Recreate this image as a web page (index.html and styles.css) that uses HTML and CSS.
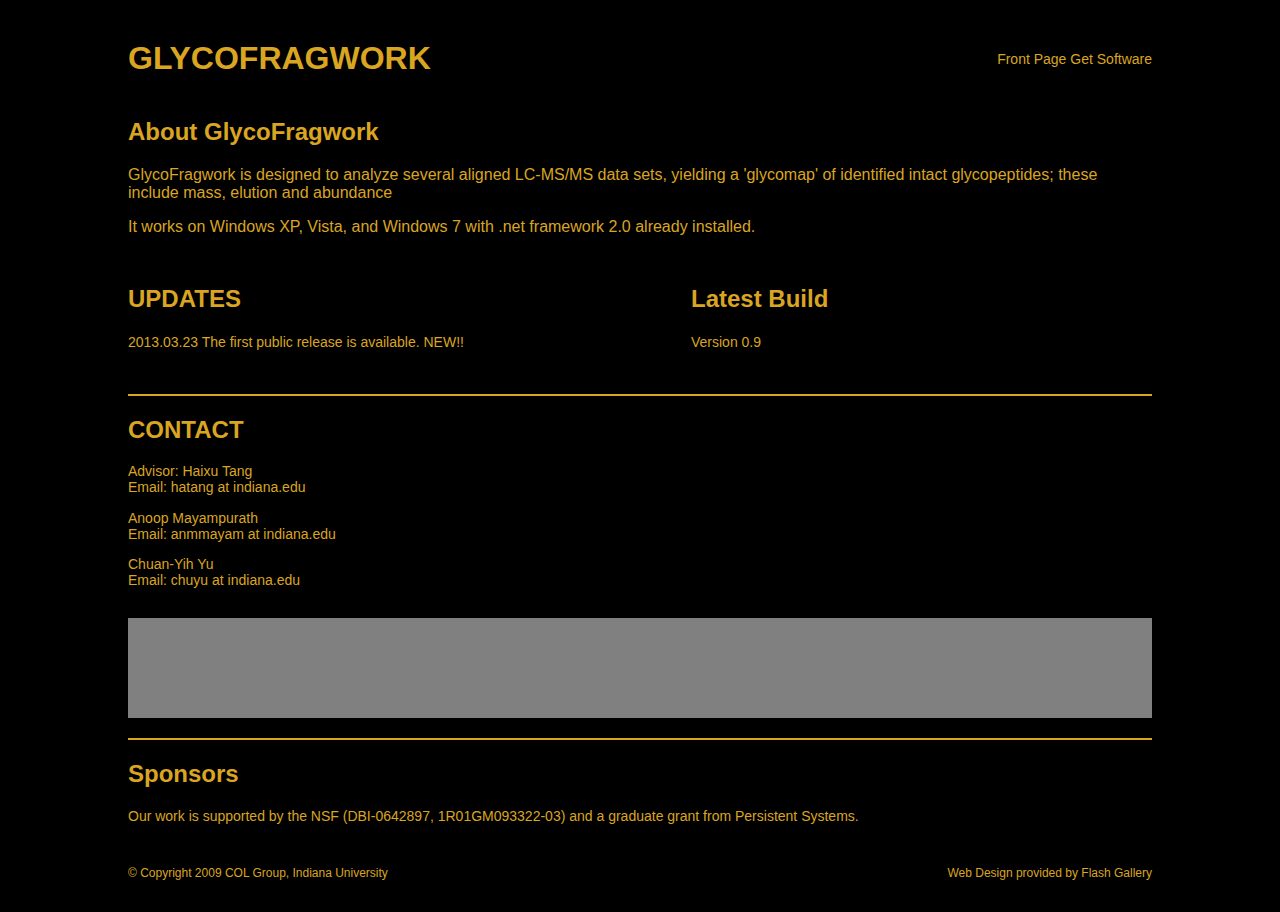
FILE: index.html
```html
<!DOCTYPE html>
<html lang="en">
<head>
<meta charset="utf-8">
<title>GlycoFragwork</title>
<link rel="stylesheet" href="styles.css">
</head>
<body>
<div class="page">
  <header class="header">
    <h1 class="logo">GLYCOFRAGWORK</h1>
    <nav class="nav"><a href="#">Front Page</a> <a href="#">Get Software</a></nav>
  </header>

  <section class="about">
    <h2 class="h2 about-title">About GlycoFragwork</h2>
    <p class="lead">GlycoFragwork is designed to analyze several aligned LC-MS/MS data sets, yielding a 'glycomap' of identified intact glycopeptides; these include mass, elution and abundance</p>
    <p class="lead lead-2">It works on Windows XP, Vista, and Windows 7 with .net framework 2.0 already installed.</p>
  </section>

  <section class="cols">
    <div class="col">
      <h2 class="h2">UPDATES</h2>
      <p class="small col-text">2013.03.23 The first public release is available. NEW!!</p>
    </div>
    <div class="col">
      <h2 class="h2">Latest Build</h2>
      <p class="small col-text">Version 0.9</p>
    </div>
  </section>

  <hr class="rule rule-1">

  <section class="contact">
    <h2 class="h2">CONTACT</h2>
    <p class="small person person-1">Advisor: Haixu Tang<br>Email: hatang at indiana.edu</p>
    <p class="small person person-2">Anoop Mayampurath<br>Email: anmmayam at indiana.edu</p>
    <p class="small person person-3">Chuan-Yih Yu<br>Email: chuyu at indiana.edu</p>
  </section>

  <div class="banner"></div>

  <hr class="rule rule-2">

  <section class="sponsors">
    <h2 class="h2">Sponsors</h2>
    <p class="small sponsor-text">Our work is supported by the NSF (DBI-0642897, 1R01GM093322-03) and a graduate grant from Persistent Systems.</p>
  </section>

  <footer class="footer">
    <span>© Copyright 2009 COL Group, Indiana University</span>
    <span>Web Design provided by Flash Gallery</span>
  </footer>
</div>
</body>
</html>
```

FILE: styles.css
```css
html, body {
  margin: 0;
  padding: 0;
  background: #000;
}

body {
  font-family: "Liberation Sans", Arial, Helvetica, sans-serif;
  color: #daa520;
}

.page {
  width: 1024px;
  margin: 0 auto;
  padding-bottom: 20px;
}

.header {
  display: flex;
  justify-content: space-between;
  align-items: center;
  padding-top: 38px;
  height: 40px;
}

.logo {
  margin: 0;
  font-size: 32px;
  line-height: 40px;
  font-weight: bold;
}

.nav {
  font-size: 14px;
  line-height: 16px;
  padding-top: 2px;
}

.nav a {
  color: #daa520;
  text-decoration: none;
}

.h2 {
  margin: 0;
  font-size: 24px;
  line-height: 28px;
  font-weight: bold;
}

.about {
  margin-top: 40px;
}

.lead {
  margin: 20px 0 0;
  font-size: 16px;
  line-height: 18px;
}

.lead-2 {
  margin-top: 16px;
}

.cols {
  display: grid;
  grid-template-columns: 563px 1fr;
  margin-top: 49px;
}

.small {
  font-size: 14px;
  line-height: 16px;
}

.col-text {
  margin: 21px 0 0;
}

.rule {
  border: 0;
  height: 2px;
  background: #daa520;
  margin: 0;
}

.rule-1 {
  margin-top: 44px;
}

.contact {
  margin-top: 20px;
}

.person {
  margin: 14px 0 0;
}

.person-1 {
  margin-top: 19px;
}

.person-2 {
  margin-top: 15px;
}

.banner {
  margin-top: 30px;
  height: 100px;
  background: #808080;
}

.rule-2 {
  margin-top: 20px;
}

.sponsors {
  margin-top: 20px;
}

.sponsor-text {
  margin: 20px 0 0;
}

.footer {
  display: flex;
  justify-content: space-between;
  margin-top: 42px;
  font-size: 12px;
  line-height: 14px;
}
```
